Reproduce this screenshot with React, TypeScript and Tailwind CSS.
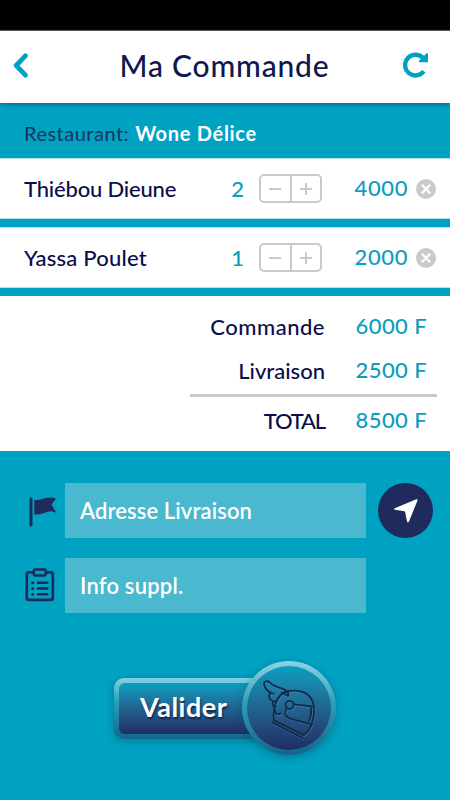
import { useState } from 'react';

type Item = {
  name: string;
  qty: number;
  price: number;
  tracking: string;
};

const initialItems: Item[] = [
  { name: 'Thiébou Dieune', qty: 2, price: 2000, tracking: 'tracking-[-0.18px]' },
  { name: 'Yassa Poulet', qty: 1, price: 2000, tracking: 'tracking-[0.2px]' },
];

const DELIVERY = 2500;

const BackIcon = () => (
  <svg width="15" height="25" viewBox="0 0 15 25" fill="none">
    <path d="M12.4 2.8 3.2 12.5 12.4 22.2" stroke="#00a2c2" strokeWidth="4.8" strokeLinecap="round" strokeLinejoin="round" />
  </svg>
);

const ReloadIcon = () => (
  <svg width="26" height="26" viewBox="0 0 26 26" fill="none">
    <path d="M20.800 19.300A10.400 10.400 0 1 1 20.500 6.500" stroke="#00a2c2" strokeWidth="4.400" />
    <path d="M25 1.200V10.200H17C15.800 10.200 15.600 9.200 16.300 8.500L23.600 1.200Z" fill="#00a2c2" />
  </svg>
);

const FlagIcon = () => (
  <svg width="28" height="30" viewBox="0 0 28 30" fill="#1e2b5c">
    <rect x="0.5" y="0.5" width="3" height="29" rx="1.3" />
    <path d="M5.3 2.8C10 4.2 16 .4 21 .6c2 0 4.6.5 6 1.200L22.500 7.500 27.300 15.800C23 13.700 19.500 14.500 16 15.800c-4 1.500-7.500 2-10.700 1.600Z" />
  </svg>
);

const NotesIcon = () => (
  <svg width="30" height="34" viewBox="0 0 30 34" fill="none" stroke="#1e2b5c" strokeLinecap="round" strokeLinejoin="round">
    <path d="M8 4.300H3.500C2.400 4.300 1.800 5 1.800 6v24.200c0 1 .7 1.700 1.700 1.700h22.600c1 0 1.700-.7 1.700-1.700V6c0-1-.7-1.700-1.700-1.700H21.500" strokeWidth="2.700" />
    <path d="M10 1.500h9.500c.8 0 1.200.5 1.200 1.200v3.600c0 .8-.4 1.200-1.200 1.200H10c-.8 0-1.200-.4-1.200-1.200V2.700c0-.7.400-1.200 1.200-1.200Z" strokeWidth="2.500" />
    <path d="M13 14.800h9.300M13 20.400h9.300M13 26.200h9.300" strokeWidth="2.600" />
    <path d="M7.600 14.800h.1M7.600 20.400h.1M7.600 26.200h.1" strokeWidth="3" />
  </svg>
);

const LocateIcon = () => (
  <svg width="24" height="24" viewBox="0 0 24 24" fill="#fff">
    <path d="M22.300.300C23.300-.1 23.800.5 23.500 1.400L15 22.500c-.4 1-1.700 1-2-.1L11.200 13.200c-.1-.6-.4-.8-.9-.9L1 10.800C0 10.600-.1 9.600.800 9.200Z" />
  </svg>
);

const RemoveIcon = () => (
  <svg width="20" height="20" viewBox="0 0 20 20">
    <circle cx="10" cy="10" r="10" fill="#cacaca" />
    <path d="M6.400 6.400 13.600 13.600M13.600 6.400 6.400 13.600" stroke="#fff" strokeWidth="2.200" strokeLinecap="round" />
  </svg>
);

const helmetLines = [
  // wing
  'M148 121C151 108 141 103 128 99 112 94 101 91 94 83 86 74 72 77 76 89 79 103 89 110 99 114L105 115',
  'M93 116C87 123 93 137 103 138L111 138',
  'M102 140C99 149 104 154 110 155',
  // shell
  'M105 192C103 181 104 166 108 152 113 128 127 111 150 107 183 103 210 113 221 138 231 168 223 219 195 240L105 195',
  'M128 112 147 121M109 165C107 175 116 179 125 174',
  // visor
  'M165 147 223 154M143 160C135 171 138 183 151 189L219 208',
  'M216 158C218 171 215 186 211 197',
  'M102 202 190 248',
];

const HelmetIcon = () => (
  <svg className="mt-[2px]" width="60" height="65" viewBox="60 65 180 195" fill="none" strokeLinecap="round" strokeLinejoin="round">
    <g stroke="#6c91b4" strokeOpacity="0.65" strokeWidth="4" transform="translate(2 3)">
      {helmetLines.map((d) => (
        <path key={d} d={d} />
      ))}
      <circle cx="152" cy="149" r="12" />
    </g>
    <g stroke="#102a49" strokeWidth="5.5">
      {helmetLines.map((d) => (
        <path key={d} d={d} />
      ))}
      <circle cx="152" cy="149" r="12" />
    </g>
  </svg>
);

const Stepper = ({ onChange }: { onChange: (delta: number) => void }) => (
  <div className="ml-[15px] flex h-[29px] w-[63px] rounded-[5px] border-2 border-[#cacaca]">
    <button className="flex flex-1 items-center justify-center border-r-2 border-[#cacaca]" onClick={() => onChange(-1)} aria-label="Moins">
      <span className="h-[2px] w-3 bg-[#cacaca]" />
    </button>
    <button className="flex flex-1 items-center justify-center" onClick={() => onChange(1)} aria-label="Plus">
      <svg width="12" height="12" viewBox="0 0 12 12" stroke="#cacaca" strokeWidth="2">
        <path d="M6 0v12M0 6h12" />
      </svg>
    </button>
  </div>
);

const TotalLine = ({ label, amount, className }: { label: string; amount: number; className: string }) => (
  <div className="flex h-11 items-center">
    <span className="w-[325px] pb-px text-right">
      <span className={className}>{label}</span>
    </span>
    <span className="w-[102px] pb-[2px] text-right tracking-[0.4px] text-[#0c9cbd]">{amount} F</span>
  </div>
);

export default function App() {
  const [items, setItems] = useState(initialItems);

  const changeQty = (name: string, delta: number) =>
    setItems(items.map((item) => (item.name === name ? { ...item, qty: Math.max(1, item.qty + delta) } : item)));

  const removeItem = (name: string) => setItems(items.filter((item) => item.name !== name));

  const subtotal = items.reduce((sum, item) => sum + item.qty * item.price, 0);

  return (
    <main className="flex h-[800px] w-[450px] flex-col overflow-hidden bg-[#00a2c2] font-['Lato',sans-serif] text-[22px] font-medium leading-none text-[#0b0d4c]">
      <div className="h-[30px] shrink-0 bg-black" />
      <header className="z-10 flex h-[73px] shrink-0 items-center justify-between border-t border-[#555] bg-white pb-1 pl-[13px] pr-[21px] shadow-[0_1px_5px_rgba(0,50,70,0.6)]">
        <button aria-label="Retour">
          <BackIcon />
        </button>
        <h1 className="pl-[18px] text-[30px] tracking-[0.8px] text-[#10174f]">Ma Commande</h1>
        <button className="-mt-px" aria-label="Actualiser">
          <ReloadIcon />
        </button>
      </header>

      <div className="flex h-[55px] shrink-0 items-center pl-[24px] pt-[5px] text-[20px]">
        <span className="font-normal tracking-[0.5px] text-[#17345f]">Restaurant:</span>
        <span className="ml-[6px] font-bold tracking-[0.7px] text-white">Wone Délice</span>
      </div>

      <div className="flex shrink-0 flex-col gap-[8px]">
        {items.map((item) => (
          <div key={item.name} className="flex h-[61px] items-center border-y border-[#b8dfe8] bg-white pl-[24px] pr-[14px]">
            <span className={item.tracking}>{item.name}</span>
            <span className="ml-auto text-[22px] text-[#0c9cbd]">{item.qty}</span>
            <Stepper onChange={(delta) => changeQty(item.name, delta)} />
            <span className="w-[86px] pb-px text-right text-[22px] tracking-[0.6px] text-[#0c9cbd]">{item.qty * item.price}</span>
            <button className="ml-[8px]" onClick={() => removeItem(item.name)} aria-label="Supprimer">
              <RemoveIcon />
            </button>
          </div>
        ))}
      </div>

      <section className="mt-[8px] h-[155px] shrink-0 bg-white pt-[9px]">
        <TotalLine label="Commande" amount={subtotal} className="tracking-[0.5px]" />
        <TotalLine label="Livraison" amount={DELIVERY} className="tracking-[0px]" />
        <div className="mb-[2px] ml-[190px] mt-px h-[3px] w-[247px] bg-[#cacaca]" />
        <TotalLine label="TOTAL" amount={subtotal + DELIVERY} className="tracking-[-1.2px]" />
      </section>

      <section className="mt-[32px] flex shrink-0 flex-col gap-5">
        <div className="flex h-[55px] items-center">
          <div className="flex w-[65px] pl-[29px] pt-[2px]">
            <FlagIcon />
          </div>
          <input
            className="h-full w-[301px] bg-[#4ab8cf] px-[15px] font-semibold tracking-[0.1px] text-white outline-none placeholder:text-white"
            placeholder="Adresse Livraison"
          />
          <button className="ml-[12px] flex size-[55px] items-center justify-center rounded-full bg-[#1e2b5c]" aria-label="Me localiser">
            <LocateIcon />
          </button>
        </div>
        <div className="flex h-[55px] items-center">
          <div className="flex w-[65px] pb-[2px] pl-[25px]">
            <NotesIcon />
          </div>
          <input
            className="h-full w-[301px] bg-[#4ab8cf] px-[15px] font-semibold tracking-[0.2px] text-white outline-none placeholder:text-white"
            placeholder="Info suppl."
          />
        </div>
      </section>

      <button className="ml-[114px] mt-[48px] flex h-[94px] w-[222px] shrink-0 items-center text-left">
        <span className="flex h-[61px] w-[156px] shrink-0 rounded-l-[10px] bg-linear-to-b from-[#83d2e1] via-[#29a5bd] via-35% to-[#14668b] p-[5px] pr-0 shadow-[0_2px_9px_rgba(0,60,90,0.4)]">
          <span className="flex w-full items-center rounded-l-[6px] bg-linear-to-b from-[#039fc0] to-[#1f2d63] pb-[3px] pl-[21px] text-[27px] font-bold tracking-[0.5px] text-white [text-shadow:1px_2px_2px_#10254d]">
            Valider
          </span>
        </span>
        <span className="-ml-[28px] flex size-[94px] shrink-0 rounded-full bg-linear-to-b from-[#8bd3e2] via-[#2b9fb9] via-45% to-[#14658a] p-[5px] shadow-[0_2px_9px_rgba(0,60,90,0.4)]">
          <span className="flex size-full items-center justify-center rounded-full bg-linear-to-b from-[#039fc0] to-[#1f2d63]">
            <HelmetIcon />
          </span>
        </span>
      </button>
    </main>
  );
}
